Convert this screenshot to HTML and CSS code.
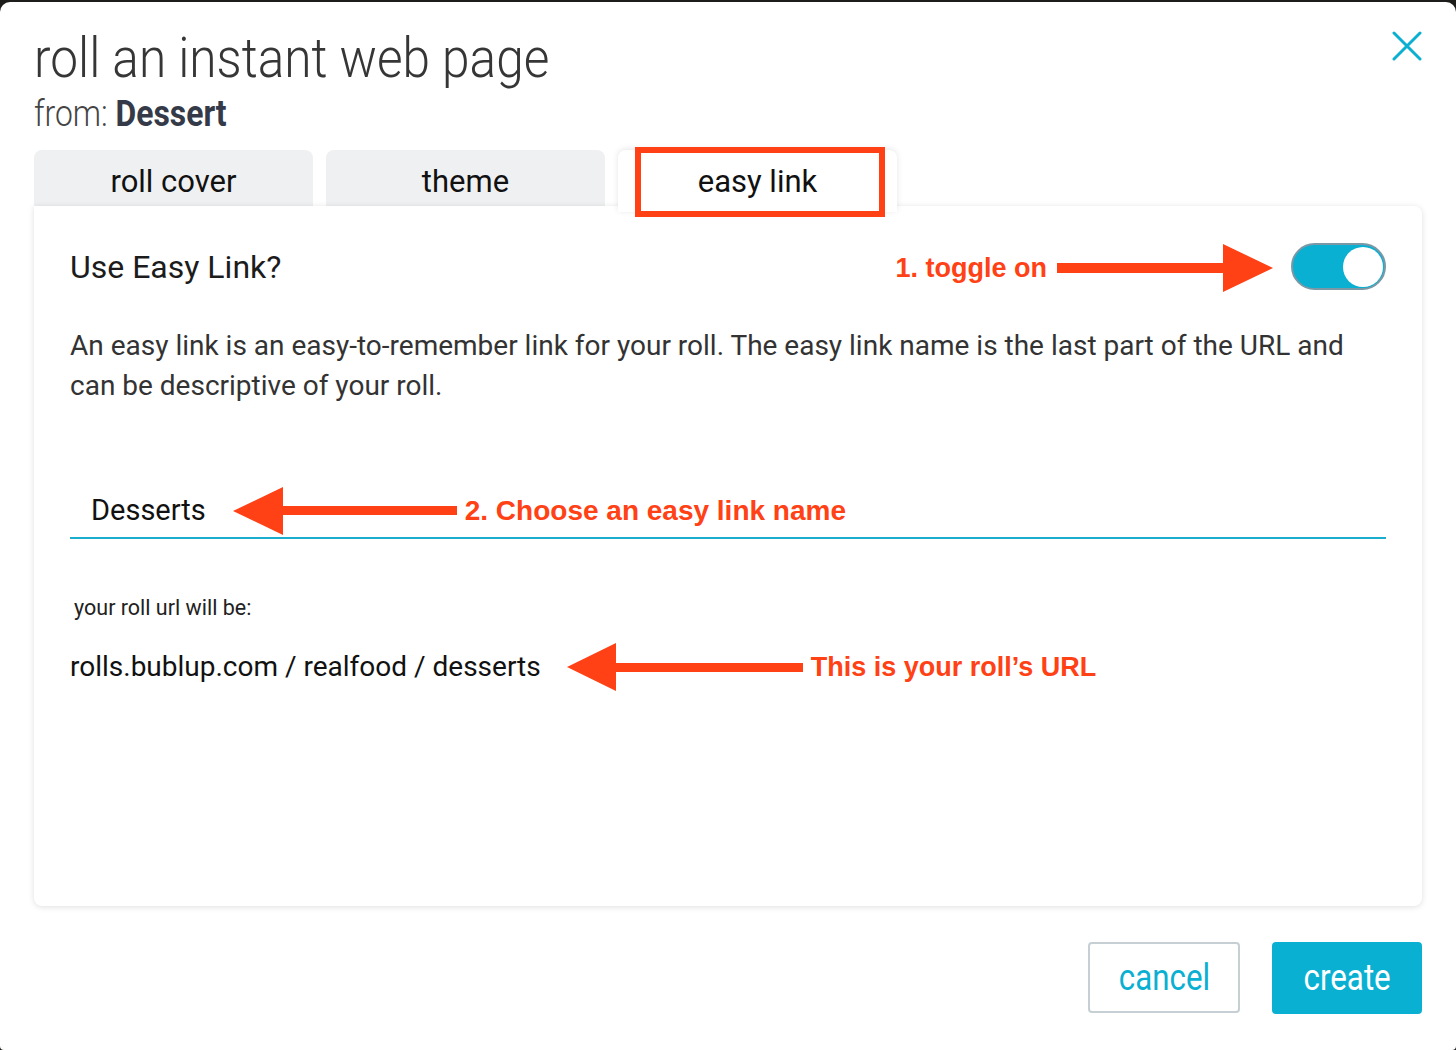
FILE: index.html
```html
<!DOCTYPE html>
<html lang="en">
<head>
    <meta charset="UTF-8">
    <title>roll an instant web page</title>
    <link rel="stylesheet" href="styles.css">
</head>
<body>
    <div class="dialog">
        <div class="header">
            <div>
                <h1 class="title"><span>roll an instant web page</span></h1>
                <div class="subtitle"><span>from: <b>Dessert</b></span></div>
            </div>
            <button class="close" aria-label="close">
                <svg width="30" height="30" viewBox="0 0 30 30"><path d="M2 2 L28 28 M28 2 L2 28" stroke="#0ab0d1" stroke-width="3" stroke-linecap="round"/></svg>
            </button>
        </div>

        <div class="tabs">
            <div class="tab">roll cover</div>
            <div class="tab">theme</div>
            <div class="tab active">easy link</div>
            <div class="mark-box"></div>
        </div>

        <div class="panel">
            <div class="toggle-row">
                <div class="label">Use Easy Link?</div>
                <div class="note note-toggle">
                    <span>1. toggle on</span>
                    <svg width="216" height="48" viewBox="0 0 216 48"><rect x="0" y="19" width="168" height="10" fill="#ff4115"/><polygon points="166,0 216,24 166,48" fill="#ff4115"/></svg>
                </div>
                <div class="switch"><div class="knob"></div></div>
            </div>

            <p class="desc">An easy link is an easy-to-remember link for your roll. The easy link name is the last part of the URL and can be descriptive of your roll.</p>

            <div class="field">
                <span class="value">Desserts</span>
                <div class="note note-field">
                    <svg width="224" height="48" viewBox="0 0 224 48"><polygon points="0,24 50,0 50,48" fill="#ff4115"/><rect x="48" y="19" width="176" height="9" fill="#ff4115"/></svg>
                    <span>2. Choose an easy link name</span>
                </div>
            </div>

            <div class="url-label">your roll url will be:</div>
            <div class="url-row">
                <span class="url">rolls.bublup.com / realfood / desserts</span>
                <div class="note note-url">
                    <svg width="236" height="48" viewBox="0 0 236 48"><polygon points="0,24 49,0 49,48" fill="#ff4115"/><rect x="47" y="20" width="189" height="9" fill="#ff4115"/></svg>
                    <span>This is your roll’s URL</span>
                </div>
            </div>
        </div>

        <div class="actions">
            <button class="btn btn-cancel"><span>cancel</span></button>
            <button class="btn btn-create"><span>create</span></button>
        </div>
    </div>
</body>
</html>
```

FILE: styles.css
```css
body {
    margin: 0;
    background-color: #1d1d1b;
    font-family: 'Roboto', 'Liberation Sans', sans-serif;
    color: #222;
}

.dialog {
    margin-top: 2px;
    height: 1048px;
    box-sizing: border-box;
    background-color: #fff;
    border-radius: 10px 10px 4px 4px;
    padding: 26px 34px 0 34px;
}

/* header */
.header {
    display: flex;
    justify-content: space-between;
    align-items: flex-start;
}

.title {
    margin: 0;
    font-size: 56px;
    font-weight: 300;
    line-height: 60px;
    color: #363636;
}

.title span,
.subtitle span {
    display: inline-block;
    transform: scaleX(0.885); /* condensed look */
    transform-origin: left center;
    white-space: nowrap;
}

.subtitle {
    margin-top: 6px;
    font-size: 36px;
    font-weight: 300;
    line-height: 40px;
    color: #444;
}

.subtitle b {
    font-weight: 700;
    color: #343a48;
}

.close {
    margin-top: 3px;
    padding: 0;
    border: none;
    background: none;
    width: 30px;
    height: 30px;
    cursor: pointer;
}

/* tabs */
.tabs {
    position: relative;
    display: flex;
    gap: 13px;
    margin-top: 16px;
}

.tab {
    width: 279px;
    height: 56px;
    box-sizing: border-box;
    padding-top: 6px;
    display: flex;
    align-items: center;
    justify-content: center;
    background-color: #eff0f2;
    border-radius: 8px 8px 0 0;
    font-size: 31px;
    color: #111;
}

.tab.active {
    position: relative;
    z-index: 2;
    background-color: #fff;
    height: 62px;
    margin-bottom: -6px;
    padding-bottom: 6px;
    box-shadow: 0 -1px 6px rgba(0, 0, 0, 0.10);
}

.mark-box {
    position: absolute;
    left: 601px;
    top: -3px;
    width: 250px;
    height: 70px;
    box-sizing: border-box;
    border: 6px solid #ff4115;
    z-index: 3;
}

/* panel */
.panel {
    position: relative;
    z-index: 1;
    height: 700px;
    box-sizing: border-box;
    padding: 37px 36px 0 36px;
    background-color: #fff;
    border-radius: 0 8px 8px 8px;
    box-shadow: 0 1px 6px rgba(0, 0, 0, 0.13);
}

.toggle-row {
    display: flex;
    align-items: center;
    height: 47px;
}

.label {
    font-size: 32px;
    color: #1c1c1c;
}

.note {
    display: flex;
    align-items: center;
    font-family: 'Liberation Sans', Arial, sans-serif;
    font-weight: 700;
    font-size: 27px;
    color: #ff4115;
    white-space: nowrap;
}

.note-toggle {
    margin-left: auto;
    margin-right: 18px;
    gap: 10px;
    padding-top: 3px;
}

.switch {
    width: 95px;
    height: 47px;
    box-sizing: border-box;
    border: 2px solid #7b98a6;
    border-radius: 24px;
    background-color: #0ab0d1;
    display: flex;
    justify-content: flex-end;
    align-items: center;
    padding-right: 1px;
}

.knob {
    width: 40px;
    height: 40px;
    border-radius: 50%;
    background-color: #fff;
}

.desc {
    margin: 36px 0 0 0;
    max-width: 1300px;
    font-size: 28px;
    line-height: 40px;
    color: #333;
}

.field {
    display: flex;
    align-items: center;
    height: 55px;
    margin-top: 76px;
    padding-left: 21px;
    border-bottom: 2px solid #1aadcd;
}

.value {
    font-size: 29px;
    color: #111;
}

.note-field {
    margin-left: 27px;
    gap: 8px;
    font-size: 28px;
    padding-top: 2px;
}

.url-label {
    margin-top: 55px;
    padding-left: 4px;
    font-size: 21.5px;
    line-height: 28px;
    color: #222;
}

.url-row {
    display: flex;
    align-items: center;
    height: 48px;
    margin-top: 20px;
}

.url {
    font-size: 28px;
    color: #111;
}

.note-url {
    margin-left: 26px;
    gap: 8px;
    padding-top: 2px;
}

/* footer buttons */
.actions {
    display: flex;
    justify-content: flex-end;
    gap: 32px;
    margin-top: 36px;
}

.btn {
    height: 72px;
    border-radius: 4px;
    font-family: 'Roboto', sans-serif;
    font-size: 36px;
    cursor: pointer;
    padding: 0;
}

.btn span {
    display: inline-block;
    transform: scaleX(0.87);
}

.btn-cancel {
    width: 152px;
    height: 71px;
    background-color: #fff;
    border: 2px solid #c5cfd4;
    color: #0ab0d1;
}

.btn-create {
    width: 150px;
    background-color: #0ab0d1;
    border: none;
    color: #fff;
}
```
